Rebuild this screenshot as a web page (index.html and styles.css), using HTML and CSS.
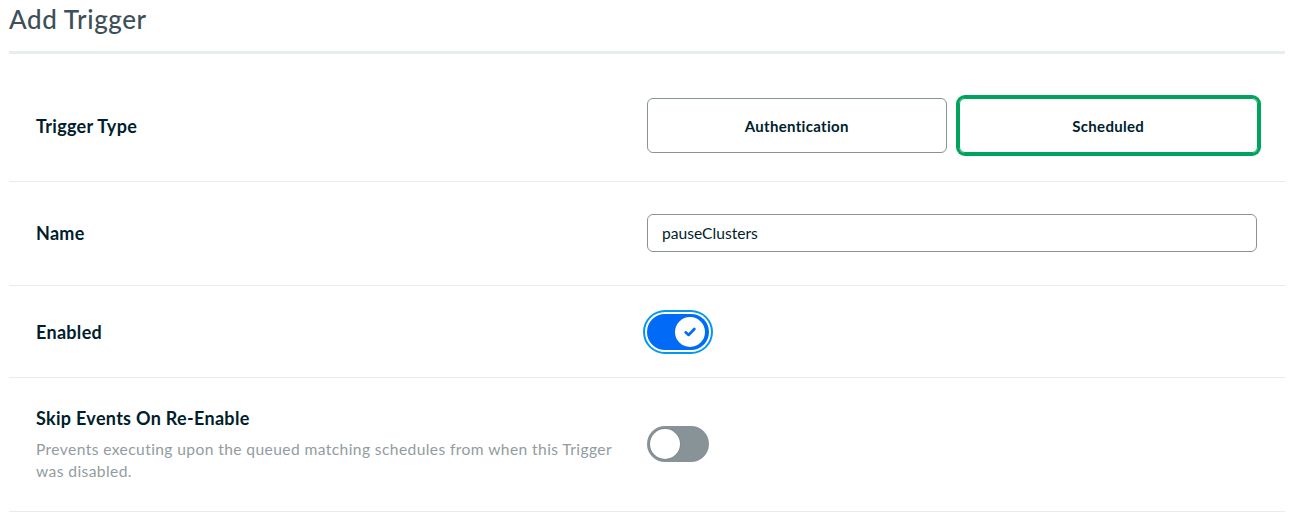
FILE: index.html
```html
<!DOCTYPE html>
<html lang="en">
<head>
<meta charset="utf-8">
<title>Add Trigger</title>
<link rel="stylesheet" href="styles.css">
</head>
<body>
<div class="page">
  <h1 class="title">Add Trigger</h1>
  <div class="form">
    <div class="row row-type">
      <div class="label-col"><span class="label">Trigger Type</span></div>
      <div class="control-col">
        <div class="choices">
          <div class="choice">Authentication</div>
          <div class="choice is-selected">Scheduled</div>
        </div>
      </div>
    </div>
    <div class="row row-name">
      <div class="label-col"><span class="label">Name</span></div>
      <div class="control-col">
        <div class="input">pauseClusters</div>
      </div>
    </div>
    <div class="row row-enabled">
      <div class="label-col"><span class="label">Enabled</span></div>
      <div class="control-col">
        <div class="toggle is-on">
          <span class="knob">
            <svg width="14" height="14" viewBox="0 0 14 14"><path d="M2.6 7.3 L5.6 10 L11.4 4" fill="none" stroke="#016bf8" stroke-width="2.6" stroke-linecap="round" stroke-linejoin="round"/></svg>
          </span>
        </div>
      </div>
    </div>
    <div class="row row-skip">
      <div class="label-col">
        <div class="label">Skip Events On Re-Enable</div>
        <p class="desc">Prevents executing upon the queued matching schedules from when this Trigger was disabled.</p>
      </div>
      <div class="control-col">
        <div class="toggle is-off"><span class="knob"></span></div>
      </div>
    </div>
  </div>
</div>
</body>
</html>
```

FILE: styles.css
```css
* { box-sizing: border-box; }
html, body { margin: 0; padding: 0; background: #fff; }
body { font-family: Lato, "Open Sans", sans-serif; color: #001e2b; }

.page { padding: 0 12px 0 9px; }

.title {
  margin: 0;
  padding-top: 3px;
  height: 48px;
  font-size: 26px;
  font-weight: 500;
  color: #3d4f58;
  line-height: 32px;
  letter-spacing: 0.6px;
  border-bottom: 3px solid #e7eeec;
  box-sizing: content-box;
}

.row {
  display: grid;
  grid-template-columns: 1fr 1fr;
  align-items: center;
  padding: 0 27px;
  border-bottom: 1px solid #e8edeb;
}
.row-type { padding-top: 44px; padding-bottom: 28px; }
.row-name { padding-top: 32px; padding-bottom: 33px; }
.row-enabled { padding-top: 28px; padding-bottom: 27px; }
.row-skip { padding-top: 28px; padding-bottom: 29px; }

.label {
  font-size: 18px;
  font-weight: 700;
  line-height: 24px;
  letter-spacing: 0.3px;
  color: #001e2b;
}

.desc {
  margin: 8px 0 0;
  width: 592px;
  font-size: 15.6px;
  line-height: 22px;
  letter-spacing: 0.4px;
  color: #929ca0;
}

.choices {
  display: grid;
  grid-template-columns: 1fr 1fr;
  gap: 12px;
}
.choice {
  height: 55px;
  display: flex;
  align-items: center;
  justify-content: center;
  border: 1px solid #889397;
  border-radius: 6px;
  font-size: 15px;
  font-weight: 700;
  letter-spacing: 0.3px;
  color: #001e2b;
}
.choice.is-selected {
  border-color: #00a35c;
  box-shadow: 0 0 0 3px #00a35c;
}

.input {
  height: 38px;
  width: 610px;
  display: flex;
  align-items: center;
  padding: 0 14px;
  border: 1px solid #889397;
  border-radius: 6px;
  font-size: 15.6px;
  color: #001e2b;
}

.toggle {
  position: relative;
  width: 62px;
  height: 36px;
  border-radius: 18px;
}
.toggle .knob {
  position: absolute;
  top: 3px;
  width: 30px;
  height: 30px;
  border-radius: 50%;
  background: #fff;
  display: flex;
  align-items: center;
  justify-content: center;
}
.toggle.is-on {
  background: #016bf8;
  box-shadow: 0 0 0 2px #fff, 0 0 0 4px #0498ec;
}
.toggle.is-on .knob { right: 4px; }
.toggle.is-off { background: #889397; }
.toggle.is-off .knob { left: 3px; box-shadow: 0 0 0 1px #7f8b8f; }
```
